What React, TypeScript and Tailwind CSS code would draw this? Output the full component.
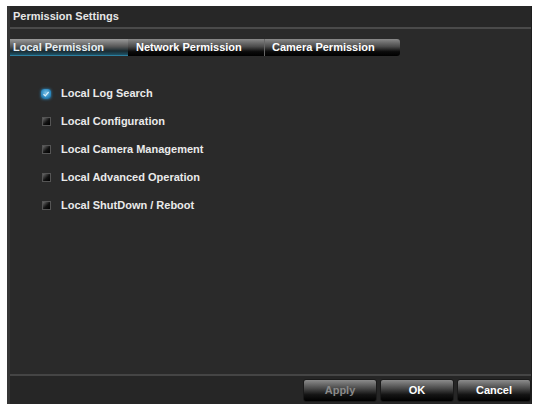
import React from "react";

const items = [
  { label: "Local Log Search", checked: true },
  { label: "Local Configuration", checked: false },
  { label: "Local Camera Management", checked: false },
  { label: "Local Advanced Operation", checked: false },
  { label: "Local ShutDown / Reboot", checked: false },
];

function Box({ checked }: { checked: boolean }) {
  if (checked) {
    return (
      <span className="w-[10px] h-[10px] rounded-[3px] bg-[radial-gradient(circle_at_50%_40%,#7cc4ea,#2a86bd_60%,#1b4f70)] shadow-[0_0_3px_#2f8cc4] flex items-center justify-center">
        <svg width="8" height="8" viewBox="0 0 8 8">
          <path d="M1.5 4.2 L3.3 5.8 L6.6 2" stroke="#d8eef9" strokeWidth="1.2" fill="none" />
        </svg>
      </span>
    );
  }
  return (
    <span className="w-[9px] h-[9px] bg-[linear-gradient(135deg,#6a6a6a,#111_55%,#000)] border border-[#555]" />
  );
}

export default function App() {
  return (
    <div
      className="w-[534px] h-[409px] bg-white pt-[6px] pl-[7px] pr-[2px] pb-[5px]"
      style={{ fontFamily: '"Liberation Sans", Arial, sans-serif' }}
    >
      <div className="w-full h-full bg-[#2a2a2a] border-l-[3px] border-l-[#353535] border-r border-r-[#1e1e1e] flex flex-col">
        <div className="h-[21px] flex items-center pl-[3px] text-[11px] font-bold text-[#e6e6e6] bg-[#272727]">
          Permission Settings
        </div>
        <div className="h-[2px] bg-[#4a4a4a]" />
        <div className="mt-[10px] h-[17px] flex pl-0">
          <div className="w-[118px] h-full flex items-center pl-[3px] text-[11px] font-bold text-[#e8f0f4] bg-[linear-gradient(to_bottom,#9a9a9a,#5a5a5a_45%,#1a2a30_75%,#1e5468)] border-b border-[#2b7fa0]">
            Local Permission
          </div>
          <div className="w-[137px] h-full flex items-center pl-[8px] text-[11px] font-bold text-white bg-[linear-gradient(to_bottom,#8a8a8a,#4a4a4a_45%,#0a0a0a_75%,#000)] border-r border-[#666]">
            Network Permission
          </div>
          <div className="w-[135px] h-full flex items-center pl-[7px] text-[11px] font-bold text-white bg-[linear-gradient(to_bottom,#8a8a8a,#4a4a4a_45%,#0a0a0a_75%,#000)] rounded-r-[3px]">
            Camera Permission
          </div>
        </div>
        <div className="flex-1 flex flex-col pt-[29px] pl-[31px] gap-[11px]">
          {items.map((it) => (
            <div key={it.label} className="h-[17px] flex items-center gap-[10px]">
              <span className="w-[10px] flex items-center justify-center">
                <Box checked={it.checked} />
              </span>
              <span className="text-[11px] font-bold text-[#eaeaea]">{it.label}</span>
            </div>
          ))}
        </div>
        <div className="h-[2px] bg-[#454545]" />
        <div className="h-[28px] flex items-center justify-end gap-[3px] pt-[2px] pb-[2px] bg-[#262626]">
          {[
            { t: "Apply", c: "text-[#8a8a8a]" },
            { t: "OK", c: "text-white" },
            { t: "Cancel", c: "text-white" },
          ].map((b) => (
            <div
              key={b.t}
              className={`w-[74px] h-[23px] rounded-[3px] flex items-center justify-center text-[11px] font-bold ${b.c} bg-[linear-gradient(to_bottom,#8c8c8c,#4a4a4a_40%,#141414_70%,#000)] border border-[#1a1a1a]`}
            >
              {b.t}
            </div>
          ))}
        </div>
      </div>
    </div>
  );
}
